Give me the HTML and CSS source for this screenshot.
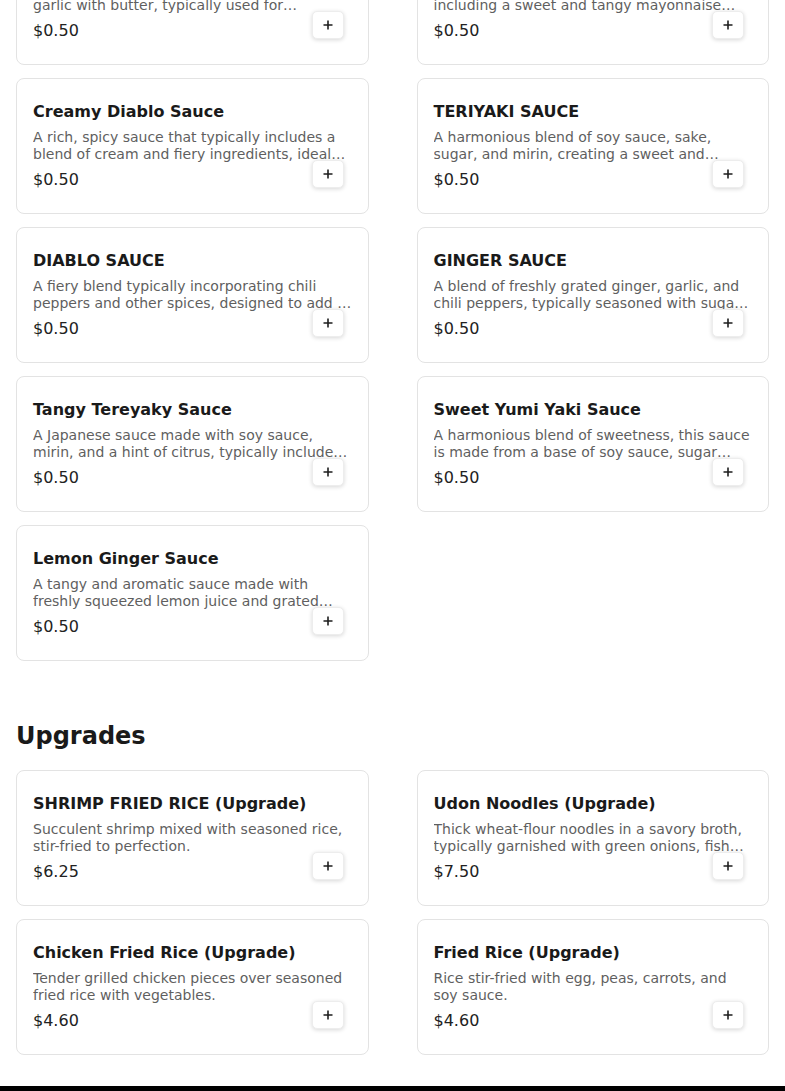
FILE: index.html
```html
<!DOCTYPE html>
<html lang="en">
<head>
<meta charset="utf-8">
<title>Menu</title>
<link rel="stylesheet" href="styles.css">
</head>
<body>
<main class="menu">
  <section class="menu-section menu-section--scrolled">
    <div class="item-grid">
      <article class="item-card">
        <h3 class="item-name">Garlic Butter Sauce</h3>
        <p class="item-desc">A rich and flavorful sauce blending minced garlic with butter, typically used for enhancing hibachi dishes.</p>
        <div class="item-price">$0.50</div>
        <button class="add-btn" aria-label="Add"><svg viewBox="0 0 10 10" width="10" height="10"><path d="M5 0.5v9M0.5 5h9"/></svg></button>
      </article>
      <article class="item-card">
        <h3 class="item-name">Yum Yum Sauce</h3>
        <p class="item-desc">A creamy blend of several ingredients, including a sweet and tangy mayonnaise base with paprika and garlic.</p>
        <div class="item-price">$0.50</div>
        <button class="add-btn" aria-label="Add"><svg viewBox="0 0 10 10" width="10" height="10"><path d="M5 0.5v9M0.5 5h9"/></svg></button>
      </article>
      <article class="item-card">
        <h3 class="item-name">Creamy Diablo Sauce</h3>
        <p class="item-desc">A rich, spicy sauce that typically includes a blend of cream and fiery ingredients, ideal for adding heat to any dish.</p>
        <div class="item-price">$0.50</div>
        <button class="add-btn" aria-label="Add"><svg viewBox="0 0 10 10" width="10" height="10"><path d="M5 0.5v9M0.5 5h9"/></svg></button>
      </article>
      <article class="item-card">
        <h3 class="item-name">TERIYAKI SAUCE</h3>
        <p class="item-desc">A harmonious blend of soy sauce, sake, sugar, and mirin, creating a sweet and savory glaze.</p>
        <div class="item-price">$0.50</div>
        <button class="add-btn" aria-label="Add"><svg viewBox="0 0 10 10" width="10" height="10"><path d="M5 0.5v9M0.5 5h9"/></svg></button>
      </article>
      <article class="item-card">
        <h3 class="item-name">DIABLO SAUCE</h3>
        <p class="item-desc">A fiery blend typically incorporating chili peppers and other spices, designed to add a bold kick.</p>
        <div class="item-price">$0.50</div>
        <button class="add-btn" aria-label="Add"><svg viewBox="0 0 10 10" width="10" height="10"><path d="M5 0.5v9M0.5 5h9"/></svg></button>
      </article>
      <article class="item-card">
        <h3 class="item-name">GINGER SAUCE</h3>
        <p class="item-desc">A blend of freshly grated ginger, garlic, and chili peppers, typically seasoned with sugar and vinegar.</p>
        <div class="item-price">$0.50</div>
        <button class="add-btn" aria-label="Add"><svg viewBox="0 0 10 10" width="10" height="10"><path d="M5 0.5v9M0.5 5h9"/></svg></button>
      </article>
      <article class="item-card">
        <h3 class="item-name">Tangy Tereyaky Sauce</h3>
        <p class="item-desc">A Japanese sauce made with soy sauce, mirin, and a hint of citrus, typically included with grilled dishes.</p>
        <div class="item-price">$0.50</div>
        <button class="add-btn" aria-label="Add"><svg viewBox="0 0 10 10" width="10" height="10"><path d="M5 0.5v9M0.5 5h9"/></svg></button>
      </article>
      <article class="item-card">
        <h3 class="item-name">Sweet Yumi Yaki Sauce</h3>
        <p class="item-desc">A harmonious blend of sweetness, this sauce is made from a base of soy sauce, sugar combined with mirin.</p>
        <div class="item-price">$0.50</div>
        <button class="add-btn" aria-label="Add"><svg viewBox="0 0 10 10" width="10" height="10"><path d="M5 0.5v9M0.5 5h9"/></svg></button>
      </article>
      <article class="item-card">
        <h3 class="item-name">Lemon Ginger Sauce</h3>
        <p class="item-desc">A tangy and aromatic sauce made with freshly squeezed lemon juice and grated ginger root.</p>
        <div class="item-price">$0.50</div>
        <button class="add-btn" aria-label="Add"><svg viewBox="0 0 10 10" width="10" height="10"><path d="M5 0.5v9M0.5 5h9"/></svg></button>
      </article>
    </div>
  </section>

  <section class="menu-section">
    <h2 class="section-title">Upgrades</h2>
    <div class="item-grid">
      <article class="item-card">
        <h3 class="item-name">SHRIMP FRIED RICE (Upgrade)</h3>
        <p class="item-desc">Succulent shrimp mixed with seasoned rice, stir-fried to perfection.</p>
        <div class="item-price">$6.25</div>
        <button class="add-btn" aria-label="Add"><svg viewBox="0 0 10 10" width="10" height="10"><path d="M5 0.5v9M0.5 5h9"/></svg></button>
      </article>
      <article class="item-card">
        <h3 class="item-name">Udon Noodles (Upgrade)</h3>
        <p class="item-desc">Thick wheat-flour noodles in a savory broth, typically garnished with green onions, fish cake and tempura flakes.</p>
        <div class="item-price">$7.50</div>
        <button class="add-btn" aria-label="Add"><svg viewBox="0 0 10 10" width="10" height="10"><path d="M5 0.5v9M0.5 5h9"/></svg></button>
      </article>
      <article class="item-card">
        <h3 class="item-name">Chicken Fried Rice (Upgrade)</h3>
        <p class="item-desc">Tender grilled chicken pieces over seasoned fried rice with vegetables.</p>
        <div class="item-price">$4.60</div>
        <button class="add-btn" aria-label="Add"><svg viewBox="0 0 10 10" width="10" height="10"><path d="M5 0.5v9M0.5 5h9"/></svg></button>
      </article>
      <article class="item-card">
        <h3 class="item-name">Fried Rice (Upgrade)</h3>
        <p class="item-desc">Rice stir-fried with egg, peas, carrots, and soy sauce.</p>
        <div class="item-price">$4.60</div>
        <button class="add-btn" aria-label="Add"><svg viewBox="0 0 10 10" width="10" height="10"><path d="M5 0.5v9M0.5 5h9"/></svg></button>
      </article>
    </div>
  </section>
</main>
<footer class="site-footer"></footer>
</body>
</html>
```

FILE: styles.css
```css
* { box-sizing: border-box; }

html, body {
  margin: 0;
  padding: 0;
  background: #ffffff;
}

body {
  font-family: "DejaVu Sans", "Liberation Sans", sans-serif;
  color: #1a1a1a;
}

.menu {
  padding: 0 16px 31px;
}

.menu-section--scrolled {
  margin-top: -71px;
}

.menu-section + .menu-section {
  margin-top: 59px;
}

.section-title {
  margin: 0 0 18px;
  font-size: 24px;
  line-height: 32px;
  font-weight: 700;
  color: #1a1a1a;
}

.item-grid {
  display: grid;
  grid-template-columns: 1fr 1fr;
  column-gap: 48px;
  row-gap: 13px;
}

.item-card {
  position: relative;
  border: 1px solid #e3e3e3;
  border-radius: 8px;
  padding: 21px 16px 21px;
  background: #fff;
}

.item-name {
  margin: 0;
  font-size: 16px;
  line-height: 24px;
  font-weight: 700;
  color: #1a1a1a;
}

.item-desc {
  margin: 5px 0 0;
  font-size: 14px;
  line-height: 17px;
  color: #5f5f5f;
  display: -webkit-box;
  -webkit-line-clamp: 2;
  -webkit-box-orient: vertical;
  overflow: hidden;
  height: 34px;
}

.item-price {
  margin-top: 5px;
  font-size: 16px;
  line-height: 24px;
  color: #222;
}

.add-btn {
  position: absolute;
  right: 24px;
  bottom: 25px;
  width: 32px;
  height: 28px;
  padding: 0;
  border: 1px solid #ededed;
  border-radius: 5px;
  background: #fff;
  box-shadow: 0 1px 4px rgba(0, 0, 0, 0.16);
  display: flex;
  align-items: center;
  justify-content: center;
  cursor: pointer;
}

.add-btn svg path {
  stroke: #1e1e1e;
  stroke-width: 1.6;
  fill: none;
}

.site-footer {
  height: 40px;
  background: #000;
}
```
